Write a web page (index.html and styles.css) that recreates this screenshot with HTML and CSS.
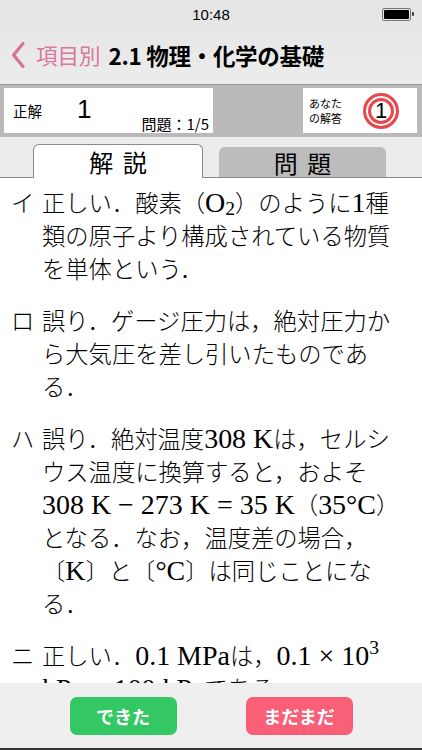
FILE: index.html
```html
<!DOCTYPE html>
<html lang="ja">
<head>
<meta charset="utf-8">
<link rel="stylesheet" href="styles.css">
</head>
<body>
<div class="screen">
  <div class="status">
    <span class="time">10:48</span>
    <span class="battery"><span class="batt-fill"></span></span>
  </div>
  <div class="nav">
    <svg class="chev" width="16" height="28" viewBox="0 0 16 28"><path d="M13 2.5 L3.5 14 L13 25.5" fill="none" stroke="#d9728f" stroke-width="3.2" stroke-linecap="round" stroke-linejoin="round"/></svg>
    <span class="back">項目別</span>
    <span class="title">2.1 物理・化学の基礎</span>
  </div>
  <div class="info">
    <div class="box left">
      <span class="lbl">正解</span>
      <span class="num">1</span>
      <span class="qno">問題：1/5</span>
    </div>
    <div class="box right">
      <span class="yours">あなた<br>の解答</span>
      <span class="ring">1</span>
    </div>
  </div>
  <div class="tabs">
    <div class="tab active">解 説</div>
    <div class="tab">問 題</div>
  </div>
  <div class="content">
    <div class="item"><span class="mark">イ</span><p>正しい．酸素（<span class="en">O<sub>2</sub></span>）のように<span class="en">1</span>種<br>類の原子より構成されている物質<br>を単体という．</p></div>
    <div class="item"><span class="mark">ロ</span><p>誤り．ゲージ圧力は，絶対圧力か<br>ら大気圧を差し引いたものであ<br>る．</p></div>
    <div class="item"><span class="mark">ハ</span><p>誤り．絶対温度<span class="en">308 K</span>は，セルシ<br>ウス温度に換算すると，およそ<br><span class="en">308 K − 273 K = 35 K</span>（<span class="en">35°C</span>）<br>となる．なお，温度差の場合，<br>〔<span class="en">K</span>〕と〔<span class="en">°C</span>〕は同じことにな<br>る．</p></div>
    <div class="item"><span class="mark">ニ</span><p>正しい．<span class="en">0.1 MPa</span>は，<span class="en">0.1 × 10<sup>3</sup></span><br><span class="en">kPa = 100 kPa</span>である．</p></div>
  </div>
  <div class="bottom">
    <div class="btn ok">できた</div>
    <div class="btn ng">まだまだ</div>
  </div>
</div>
</body>
</html>
```
FILE: styles.css
```css
html, body { margin: 0; padding: 0; }
body { width: 422px; height: 750px; overflow: hidden; font-family: "Liberation Sans", "Noto Sans CJK JP", sans-serif; color: #000; }
.screen { width: 422px; height: 750px; display: flex; flex-direction: column; background: #fff; }

.status { height: 30px; flex: none; display: flex; align-items: center; justify-content: center; position: relative; background: linear-gradient(#e4e4e4, #e7e7e7); }
.time { font-size: 15px; font-weight: 500; margin-top: -2px; }
.battery { position: absolute; right: 11px; top: 8px; width: 25px; height: 9px; border: 1px solid #777; border-radius: 2px; padding: 1px; }
.battery::after { content: ""; position: absolute; right: -4px; top: 3px; width: 2px; height: 4px; background: #444; border-radius: 0 1px 1px 0; }
.batt-fill { display: block; width: 100%; height: 100%; background: #000; border-radius: 1px; }

.nav { height: 54px; flex: none; box-sizing: border-box; padding-bottom: 5px; display: flex; align-items: center; padding-left: 10px; background: linear-gradient(#e7e7e7, #ececec); }
.chev { margin-right: 10px; margin-top: 1px; }
.back { font-size: 21.5px; color: #d8789a; font-family: "Noto Sans CJK JP", sans-serif; margin-right: 8px; }
.title { font-size: 22.5px; font-weight: 700; font-family: "Noto Sans CJK JP", sans-serif; letter-spacing: -0.3px; }

.info { height: 53px; flex: none; box-sizing: border-box; border-top: 1px solid #9a9a9a; background: #bababa; padding: 3px 5px 4px 4px; display: flex; justify-content: space-between; }
.box { background: #fff; height: 45px; position: relative; }
.left { width: 209px; }
.right { width: 114px; display: flex; align-items: center; }
.lbl { position: absolute; left: 9px; top: 12px; font-size: 14.5px; font-family: "Noto Sans CJK JP", sans-serif; }
.num { position: absolute; left: 73px; top: 6px; font-size: 26px; line-height: 30px; }
.qno { position: absolute; right: 4px; bottom: 0; font-size: 15px; font-family: "Noto Sans CJK JP", sans-serif; line-height: 19px; }
.yours { font-size: 11px; line-height: 15px; margin-left: 6px; font-family: "Noto Sans CJK JP", sans-serif; }
.ring { margin-left: 21px; width: 30px; height: 30px; border: 3px solid #e8484c; border-radius: 50%; box-shadow: inset 0 0 0 2px #fff, inset 0 0 0 5px #e8484c; display: flex; align-items: center; justify-content: center; font-size: 22px; line-height: 1; }

.tabs { height: 41px; flex: none; box-sizing: border-box; background: #ececec; border-bottom: 1px solid #8a8a8a; display: flex; align-items: flex-end; padding-left: 33px; gap: 16px; }
.tab { font-family: "Noto Sans CJK JP", sans-serif; font-size: 24px; word-spacing: 4px; display: flex; align-items: center; justify-content: center; box-sizing: border-box; border-radius: 6px 6px 0 0; }
.tab.active { width: 170px; background: #fff; border: 1px solid #8a8a8a; border-bottom: none; margin-bottom: -1px; height: 34px; }
.tab:not(.active) { width: 167px; height: 30px; background: #bcbcbc; }

.content { flex: 1; overflow: hidden; padding: 10px 0 0 11px; font-family: "Liberation Serif", "Noto Sans CJK JP", serif; font-size: 23.3px; line-height: 33px; font-weight: 300; }
.item { display: flex; margin-bottom: 19px; }
.mark { width: 31px; flex: none; }
.item p { margin: 0; }
.en { font-size: 1.2em; line-height: 0; font-weight: 400; }
sub { font-size: 0.7em; vertical-align: -0.15em; line-height: 0; }
sup { font-size: 0.7em; vertical-align: 0.55em; line-height: 0; }

.bottom { height: 67px; flex: none; box-sizing: border-box; background: #efefef; border-bottom: 2px solid #333; display: flex; justify-content: center; gap: 69px; padding-top: 14px; }
.btn { width: 107px; height: 38px; border-radius: 7px; color: #fff; font-family: "Noto Sans CJK JP", sans-serif; font-weight: 700; font-size: 18px; display: flex; align-items: center; justify-content: center; }
.ok { background: #33c864; }
.ng { background: #fa5f78; }
```
